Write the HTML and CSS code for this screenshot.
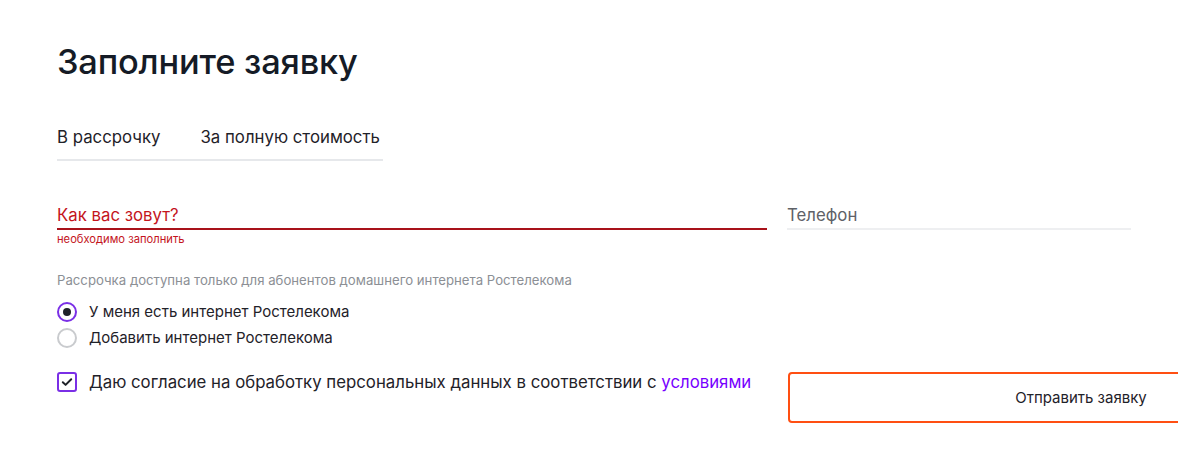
FILE: index.html
```html
<!DOCTYPE html>
<html lang="ru">
<head>
<meta charset="utf-8">
<link rel="stylesheet" href="styles.css">
</head>
<body>
<div class="page">
  <h1 class="title">Заполните заявку</h1>
  <div class="tabs">
    <span class="tab">В рассрочку</span>
    <span class="tab">За полную стоимость</span>
  </div>
  <div class="fields">
    <div class="field field-name">
      <div class="field-input error">Как вас зовут?</div>
      <div class="field-error">необходимо заполнить</div>
    </div>
    <div class="field field-phone">
      <div class="field-input">Телефон</div>
    </div>
  </div>
  <p class="info">Рассрочка доступна только для абонентов домашнего интернета Ростелекома</p>
  <div class="radios">
    <label class="radio-row"><span class="radio checked"></span><span>У меня есть интернет Ростелекома</span></label>
    <label class="radio-row"><span class="radio"></span><span>Добавить интернет Ростелекома</span></label>
  </div>
  <div class="bottom">
    <label class="check-row">
      <span class="checkbox"><svg width="14" height="14" viewBox="0 0 14 14"><path d="M2.8 7.2l2.8 2.7L11.2 4.3" fill="none" stroke="#1f2229" stroke-width="2" stroke-linecap="round" stroke-linejoin="round"/></svg></span>
      <span class="check-text">Даю согласие на обработку персональных данных в соответствии с <a class="link">условиями</a></span>
    </label>
    <button class="submit">Отправить заявку</button>
  </div>
</div>
</body>
</html>
```
FILE: styles.css
```css
html, body {
  margin: 0;
  padding: 0;
  background: #fff;
  overflow: hidden;
}
body {
  font-family: Inter, "Noto Sans", "Liberation Sans", sans-serif;
  color: #1f2229;
}
.page {
  width: 1178px;
  height: 476px;
  padding: 40px 0 0 57px;
  box-sizing: border-box;
  overflow: hidden;
}
.title {
  margin: 0;
  font-size: 34.4px;
  line-height: 44px;
  font-weight: 500;
  color: #151b26;
  letter-spacing: -0.2px;
}
.tabs {
  display: flex;
  gap: 40px;
  width: 326px;
  margin-top: 41px;
  padding-bottom: 10px;
  border-bottom: 2px solid #e6e8eb;
}
.tab {
  font-size: 16.8px;
  line-height: 24px;
  color: #1f2229;
}
.fields {
  display: flex;
  gap: 20px;
  margin-top: 42px;
}
.field-name { width: 710px; flex: none; }
.field-phone { width: 344px; flex: none; }
.field-input {
  font-size: 16.8px;
  line-height: 24px;
  color: #5e6167;
  border-bottom: 2px solid #eeeff1;
  padding-bottom: 1px;
}
.field-input.error {
  color: #c4141c;
  border-bottom-color: #a8121a;
}
.field-error {
  margin-top: 2px;
  font-size: 11.2px;
  line-height: 14px;
  color: #c4141c;
}
.info {
  margin: 25px 0 0;
  font-size: 13.2px;
  line-height: 18px;
  color: #8c8f95;
}
.radios {
  display: flex;
  flex-direction: column;
  gap: 2px;
  margin-top: 11px;
}
.radio-row, .check-row {
  display: flex;
  align-items: center;
  gap: 12px;
  font-size: 15px;
  line-height: 24px;
  color: #1f2229;
}
.radio {
  flex: none;
  width: 20px;
  height: 20px;
  box-sizing: border-box;
  border-radius: 50%;
  border: 2px solid #c9cbce;
  display: flex;
  align-items: center;
  justify-content: center;
}
.radio.checked {
  border-color: #7a2fe6;
}
.radio.checked::after {
  content: "";
  width: 8px;
  height: 8px;
  border-radius: 50%;
  background: #1f2229;
}
.bottom {
  display: flex;
  align-items: flex-start;
  gap: 21px;
  margin-top: 21px;
}
.check-row {
  flex: none;
  width: 710px;
  margin-top: 1px;
  font-size: 16.8px;
  line-height: 20px;
  align-items: center;
}
.check-text {
  white-space: nowrap;
}
.checkbox {
  flex: none;
  width: 20px;
  height: 20px;
  box-sizing: border-box;
  border: 2px solid #7a2fe6;
  border-radius: 3px;
  display: flex;
  align-items: center;
  justify-content: center;
}
.link {
  color: #7700ff;
  text-decoration: none;
}
.submit {
  flex: none;
  width: 586px;
  height: 51px;
  margin-top: 1px;
  background: #fff;
  border: 2px solid #ff4f12;
  border-radius: 4px;
  font-family: inherit;
  font-size: 15px;
  color: #1f2229;
  padding: 0;
}
```
